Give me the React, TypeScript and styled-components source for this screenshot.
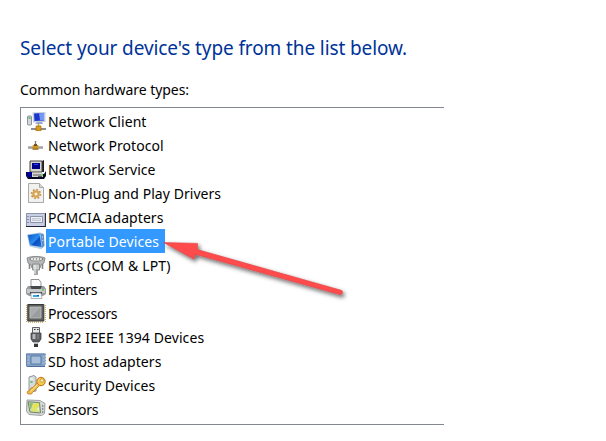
import React from "react";
import styled, { createGlobalStyle } from "styled-components";

const GlobalStyle = createGlobalStyle`
  body { margin: 0; background: #fff; overflow: hidden; }
`;

const Page = styled.main`
  position: relative;
  box-sizing: border-box;
  width: 606px;
  height: 441px;
  padding: 34px 0 0 20px;
  background: #fff;
  color: #000;
  font-family: "Noto Sans", "Open Sans", sans-serif;
`;

const Title = styled.h1`
  margin: 0;
  font-size: 19px;
  line-height: 28px;
  font-weight: 400;
  letter-spacing: -0.11px;
  color: #003399;
  white-space: nowrap;
`;

const Caption = styled.p`
  margin: 17px 0 7px;
  font-size: 14px;
  line-height: 21px;
  letter-spacing: -0.04px;
  white-space: nowrap;
`;

const List = styled.ul`
  box-sizing: border-box;
  width: 424px;
  height: 318px;
  margin: 0;
  padding: 1px 0 0 5px;
  list-style: none;
  border: 1px solid #828790;
  border-right: 0;
`;

const Row = styled.li`
  display: flex;
  align-items: center;
  height: 24px;
`;

const Label = styled.span<{ $selected?: boolean; $width: number; $spacing: number }>`
  box-sizing: border-box;
  width: ${(p) => p.$width}px;
  height: 24px;
  padding-left: 2px;
  font-size: 14px;
  line-height: 25px;
  letter-spacing: ${(p) => p.$spacing}px;
  white-space: nowrap;
  color: ${(p) => (p.$selected ? "#fff" : "#000")};
  background: ${(p) => (p.$selected ? "#3399ff" : "transparent")};
`;

const Icon = styled.svg`
  flex: none;
  width: 20px;
  height: 20px;
`;

const Arrow = styled.svg`
  position: absolute;
  left: 155px;
  top: 230px;
  width: 200px;
  height: 80px;
  pointer-events: none;
`;

const icons: Record<string, React.ReactNode> = {
  client: (
    <>
      <rect x="1.5" y="5" width="4" height="9" rx=".7" fill="#d5d8dc" stroke="#777f88" strokeWidth=".8" />
      <path d="M2.5 7h2" stroke="#34c634" strokeWidth="1.6" />
      <path d="M6.5 1.5 19.5 1v10l-12.5.5z" fill="#c4cbe0" />
      <path d="M8 2.5 18 2v7.5l-9.5.5z" fill="#1936cc" />
      <path d="M13 2.2 18 2v7l-4 .2z" fill="#7598f2" />
      <path d="M11 11h5l1 2H9z" fill="#9ba9cd" />
      <path d="M5 18h15" stroke="#8f8f8f" strokeWidth="2" />
      <path d="M12.5 13v3" stroke="#c99b32" strokeWidth="1.5" />
      <rect x="10" y="15" width="5" height="5" fill="#d99a1b" stroke="#98650b" strokeWidth=".6" />
    </>
  ),
  protocol: (
    <>
      <path d="M2 12.5h15" stroke="#858585" strokeWidth="2.2" />
      <path d="M2 12h15" stroke="#c9c9c9" strokeWidth=".8" />
      <path d="M9.5 6v4" stroke="#777" strokeWidth="1.3" />
      <path d="M6.7 10h5.6v4H6.7z" fill="#ce9524" />
      <path d="M8 9h3v2H8z" fill="#6d5526" />
      <path d="M6.5 14.2h6" stroke="#805814" />
    </>
  ),
  service: (
    <>
      <path d="M4 2h12l2-1v12H4z" fill="#202020" />
      <path d="M4 2h12v11H4z" fill="#d7d5ce" stroke="#444" />
      <path d="M6 4h8v6H6z" fill="#000089" />
      <path d="M8 5h4v1H8z" fill="#1947ff" />
      <path d="M0 13h5l2 2h11l2-3v5l-2 3H2l-2-3z" fill="#080820" />
      <path d="M5 14h12v4H5z" fill="#d8d8d3" />
      <path d="M1 13h5v5H1z" fill="#000096" />
      <path d="M7 16h8M12 17.5h4" stroke="#555" />
      <path d="M15 16h2" stroke="#18c218" />
    </>
  ),
  file: (
    <>
      <path d="M2.5.5h11l4 4v15h-15z" fill="#f1f1f0" stroke="#a9a9a9" />
      <path d="M13.5.5v4h4" fill="#d7d7d7" stroke="#aaa" />
      <circle cx="10" cy="11" r="4.4" fill="none" stroke="#c9964d" strokeWidth="1.8" strokeDasharray="1.8 1.6" />
      <circle cx="10" cy="11" r="2.8" fill="#f4d18a" stroke="#d6a35a" strokeWidth="2" />
      <circle cx="10" cy="11" r="1" fill="#fff" />
    </>
  ),
  pcmcia: (
    <>
      <path d="M0 6h19v13H0z" fill="#c9cfe2" />
      <path d="M.5 19V6.5h18" fill="none" stroke="#8993ac" />
      <path d="M19.4 6v13.5H0" fill="none" stroke="#242438" strokeWidth="1.1" />
      <path d="M4.5 9.5h12v6h-12z" fill="#eef0f6" stroke="#8c93aa" />
      <path d="M6.5 11.5h8v2h-8z" fill="#e2e5ed" stroke="#b4b9ca" strokeWidth=".7" />
      <path d="M1 9.5h2M1 12.5h2M1 15.5h2" stroke="#8991a8" />
    </>
  ),
  portable: (
    <>
      <defs>
        <linearGradient id="tablet-screen" x1="0" y1="0" x2="1" y2="1">
          <stop offset="0" stopColor="#0a50c0" />
          <stop offset=".5" stopColor="#2a8bf2" />
          <stop offset=".6" stopColor="#0b4cc0" />
          <stop offset="1" stopColor="#1a74dc" />
        </linearGradient>
      </defs>
      <path d="m1 3.5 13-2 4 1.5.5 12-3 3-12-3z" fill="#9fc4e6" />
      <path d="m2 4.2 11.5-1.7L15.5 16l-11.5-2z" fill="url(#tablet-screen)" />
      <path d="m14.5 2.2 3.3 1.3.5 11-2 2.5z" fill="#5a91cc" />
      <path d="m16 6 1 .3m-.7 3 1 .3" stroke="#d6efff" />
      <path d="m3.5 15 11 2.5" stroke="#c3d4e4" />
    </>
  ),
  ports: (
    <>
      <path d="M1 3c3-2 15-2 18 0l-1 5-3 2-1 3H6l-1-3-3-2z" fill="#b5b7b8" stroke="#787c7f" strokeWidth=".8" />
      <ellipse cx="10" cy="4" rx="7" ry="2" fill="#e6e6e3" stroke="#898989" strokeWidth=".8" />
      <path d="M4 4h1m2 0h1m2 0h1m2 0h1m2 0h1" stroke="#555" />
      <path d="M6.5 9h7v6h-7z" fill="#cbcdcc" stroke="#7b7f81" strokeWidth=".8" />
      <path d="M8 15h4v5H8z" fill="#a0a4a6" />
      <path d="M3.5 9v5M16.5 9v5" stroke="#888" strokeWidth="1.6" />
      <path d="M9 10v9" stroke="#f4f4f4" />
    </>
  ),
  printer: (
    <>
      <path d="M5 .5h8l2 3V9H5z" fill="#fafafa" stroke="#909396" />
      <path d="M2 7h16l2 3v5l-3 2H3l-3-2v-5z" fill="#989b9e" />
      <path d="M1 10h18v4H1z" fill="#c6c8ca" />
      <path d="M4 7h12l-1.5 3h-9z" fill="#44484d" />
      <path d="M4 13h12v2H4z" fill="#40464c" />
      <path d="M5 14h10l1 5.5H5z" fill="#f8fcff" stroke="#8b979f" strokeWidth=".7" />
      <path d="M7 16h6v2H7z" fill="#36a8e9" />
      <path d="M11 16h2v1h-2z" fill="#135bab" />
      <path d="M16 11h2" stroke="#59c653" strokeWidth="1.3" />
    </>
  ),
  processor: (
    <>
      <path d="M2 19.2h16" stroke="#d0a14c" strokeWidth="1.3" strokeDasharray="1 1" />
      <path d="M19.3 2v17M.6 2v17" stroke="#d0a14c" strokeWidth="1.1" strokeDasharray="1 1" />
      <path d="M1.8 1.5h16v16.5h-16z" fill="#5d5f5f" stroke="#363838" />
      <path d="M4 4h11v11H4z" fill="#a9acac" stroke="#c3c5c5" strokeWidth=".8" />
      <path d="m4.5 14.5 10-10v10z" fill="#9a9d9e" />
    </>
  ),
  sbp: (
    <>
      <path d="M6.5.5h7v6h-7z" fill="#e3e3e4" stroke="#606264" />
      <path d="M8 2.5h1.5m1.5 0h1.5" stroke="#333" />
      <path d="M5 6h10v6l-2 3H7l-2-3z" fill="#5d5f62" stroke="#404245" strokeWidth=".8" />
      <path d="M6.5 7h3v5h-3z" fill="#b4b6b8" />
      <path d="M12 7v5" stroke="#929496" />
      <path d="M8 15h4v2H8z" fill="#bdbdbd" />
      <path d="M8 17h4v3H8z" fill="#34363b" />
    </>
  ),
  sd: (
    <>
      <path d="M0 2.5h20v2h-1v1h1v2h-1v1h1v2h-1v1h1v2h-1v2H0z" fill="#829fc4" />
      <path d="M.5 15V3h18" fill="none" stroke="#6483ad" />
      <path d="M5 5h10v8H5z" fill="#a9bfd9" stroke="#5b7ca6" />
      <path d="M1.5 6h2M1.5 9h2M1.5 12h2M16.5 6h2M16.5 9h2M16.5 12h2" stroke="#b9cce1" />
      <path d="M1 15.5h18" stroke="#4c6f9b" />
    </>
  ),
  security: (
    <>
      <path d="M3 2 8 .5 10 2v14l-6 1-1-1z" fill="#d7dadb" stroke="#92989c" />
      <path d="M4 4h3" stroke="#fff" />
      <path d="M4.5 7h2" stroke="#30be36" strokeWidth="1.5" />
      <circle cx="15" cy="6.5" r="4.2" fill="#f8c84d" stroke="#b5741a" />
      <circle cx="16" cy="5.5" r="1.6" fill="#fff5cf" stroke="#b07c2c" strokeWidth=".6" />
      <path d="m11 8 2.5 2.5-7 7-1 1.5H2l-1-2 3-2 1-2 2-.5z" fill="#f2bd45" stroke="#b9771d" strokeWidth=".8" />
      <path d="m11.5 9.5-7 7" stroke="#ffe6a0" />
    </>
  ),
  sensors: (
    <>
      <path d="m1 1 13 .5 5 3-.5 10-3 2L3 15.5.5 12z" fill="#d6d9d6" stroke="#929998" strokeWidth=".9" />
      <path d="m2 2.8 11.5.8 1 10.4-10.5-1z" fill="#cfe590" stroke="#718073" />
      <path d="m3 4 4 .3L4.5 11z" fill="#8fbb77" />
      <path d="M12.5 4.5 9 8l-2-2M9 8l-1 4.5" fill="none" stroke="#f2e23a" strokeWidth="1.8" />
      <path d="m11 10 2-2v4z" fill="#edf4d0" />
      <path d="M16.7 6.5v1m0 2v1m0 2v1" stroke="#3e4648" strokeWidth="1.3" />
    </>
  ),
};

const devices = [
  { icon: "client", name: "Network Client", width: 101, spacing: 0.06 },
  { icon: "protocol", name: "Network Protocol", width: 119, spacing: 0.06 },
  { icon: "service", name: "Network Service", width: 110, spacing: 0.06 },
  { icon: "file", name: "Non-Plug and Play Drivers", width: 176, spacing: 0.05 },
  { icon: "pcmcia", name: "PCMCIA adapters", width: 119, spacing: 0.06 },
  { icon: "portable", name: "Portable Devices", width: 119, spacing: 0.12, selected: true },
  { icon: "ports", name: "Ports (COM & LPT)", width: 126, spacing: 0.16 },
  { icon: "printer", name: "Printers", width: 53, spacing: -0.35 },
  { icon: "processor", name: "Processors", width: 73, spacing: -0.22 },
  { icon: "sbp", name: "SBP2 IEEE 1394 Devices", width: 160, spacing: 0.09 },
  { icon: "sd", name: "SD host adapters", width: 117, spacing: 0.06 },
  { icon: "security", name: "Security Devices", width: 111, spacing: 0.07 },
  { icon: "sensors", name: "Sensors", width: 54, spacing: -0.25 },
];

export default function App() {
  return (
    <>
      <GlobalStyle />
      <Page>
        <Title>Select your device's type from the list below.</Title>
        <Caption>Common hardware types:</Caption>
        <List>
          {devices.map((d) => (
            <Row key={d.name}>
              <Icon viewBox="0 0 20 20" aria-hidden="true">{icons[d.icon]}</Icon>
              <Label $width={d.width} $spacing={d.spacing} $selected={d.selected}>{d.name}</Label>
            </Row>
          ))}
        </List>
        <Arrow viewBox="155 230 200 80" aria-hidden="true">
          <defs>
            <filter id="arrow-shadow" x="-10%" y="-20%" width="120%" height="150%">
              <feDropShadow dx="2" dy="2.5" stdDeviation="2" floodColor="#000" floodOpacity=".6" />
            </filter>
          </defs>
          <path
            d="M163.5 242.5 197.7 243.4 197.2 249.5 341 290.2Q343 291 342.5 293 341.5 295 339.5 294.5L195.5 254.3 193.8 259Z"
            fill="#ff4b4b"
            stroke="#d94343"
            strokeWidth=".6"
            filter="url(#arrow-shadow)"
          />
        </Arrow>
      </Page>
    </>
  );
}
